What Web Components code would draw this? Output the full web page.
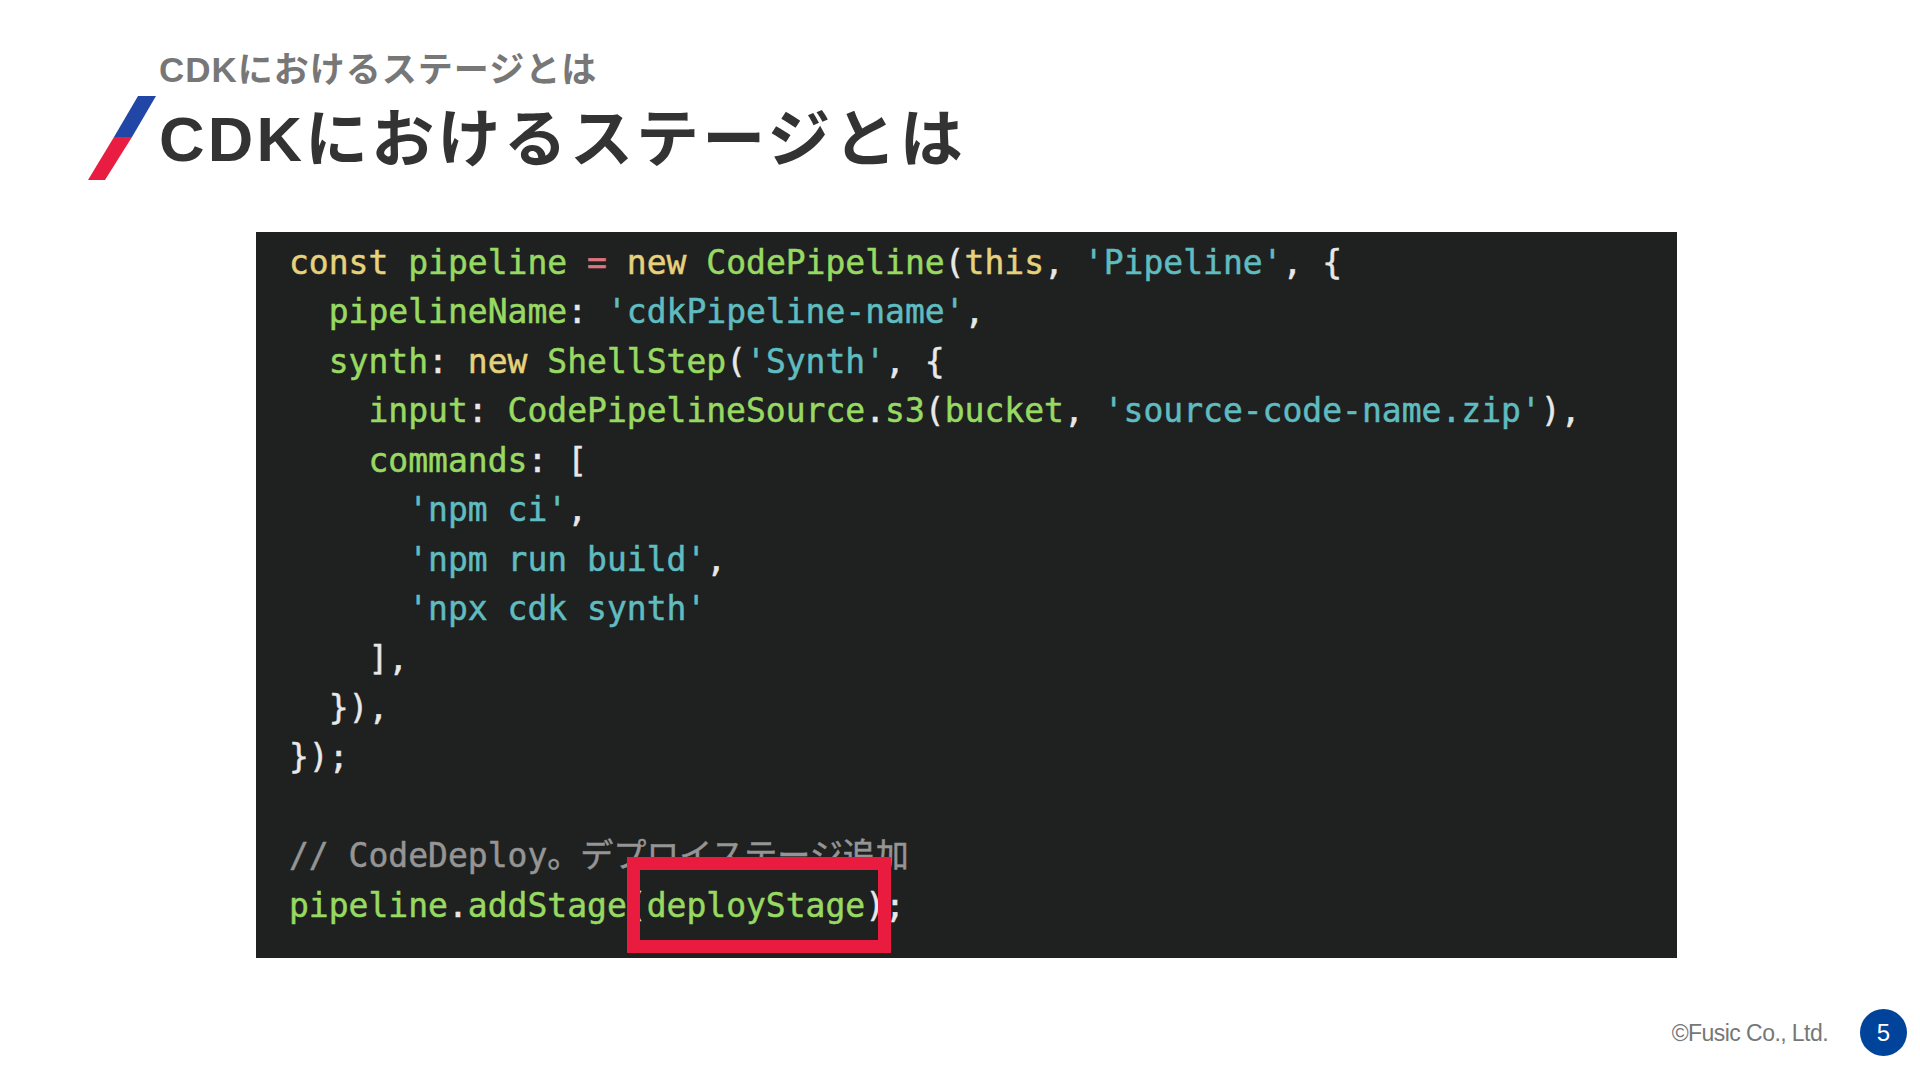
<!DOCTYPE html>
<html lang="ja"><head><meta charset="utf-8"><title>CDKにおけるステージとは</title>
<style>html,body{margin:0;padding:0;background:#fff}</style></head>
<body>
<slide-page>
  <slide-header slot="header" section="CDKにおけるステージとは" heading="CDKにおけるステージとは"></slide-header>
  <code-panel>
    <code-line><i class="k">const</i> <i class="f">pipeline</i> <i class="o">=</i> <i class="k">new</i> <i class="f">CodePipeline</i><i class="p">(</i><i class="k">this</i><i class="p">,</i> <i class="s">'Pipeline'</i><i class="p">,</i> <i class="p">{</i></code-line>
    <code-line>  <i class="f">pipelineName</i><i class="p">:</i> <i class="s">'cdkPipeline-name'</i><i class="p">,</i></code-line>
    <code-line>  <i class="f">synth</i><i class="p">:</i> <i class="k">new</i> <i class="f">ShellStep</i><i class="p">(</i><i class="s">'Synth'</i><i class="p">,</i> <i class="p">{</i></code-line>
    <code-line>    <i class="f">input</i><i class="p">:</i> <i class="f">CodePipelineSource</i><i class="p">.</i><i class="f">s3</i><i class="p">(</i><i class="f">bucket</i><i class="p">,</i> <i class="s">'source-code-name.zip'</i><i class="p">),</i></code-line>
    <code-line>    <i class="f">commands</i><i class="p">:</i> <i class="p">[</i></code-line>
    <code-line>      <i class="s">'npm ci'</i><i class="p">,</i></code-line>
    <code-line>      <i class="s">'npm run build'</i><i class="p">,</i></code-line>
    <code-line>      <i class="s">'npx cdk synth'</i></code-line>
    <code-line>    <i class="p">],</i></code-line>
    <code-line>  <i class="p">}),</i></code-line>
    <code-line><i class="p">});</i></code-line>
    <code-line> </code-line>
    <code-line><i class="c">// CodeDeploy。デプロイステージ追加</i></code-line>
    <code-line><i class="f">pipeline</i><i class="p">.</i><i class="f">addStage</i><i class="p">(</i><i class="f">deployStage</i><i class="p">);</i></code-line>
    <highlight-box slot="overlay"></highlight-box>
  </code-panel>
  <slide-footer slot="footer" page="5">©Fusic Co., Ltd.</slide-footer>
</slide-page>
<script>
function def(name, html, init){
  customElements.define(name, class extends HTMLElement{
    constructor(){super();this.attachShadow({mode:'open'}).innerHTML=html;}
    connectedCallback(){ if(init) init(this); }
  });
}
def('slide-page',`<style>
:host{display:flex;flex-direction:column;width:1920px;height:1080px;overflow:hidden;background:#fff;box-sizing:border-box}
.main{display:flex;justify-content:flex-start;padding:0 0 0 256px}
.foot{margin-top:auto}
</style><slot name="header"></slot><div class="main"><slot></slot></div><div class="foot"><slot name="footer"></slot></div>`);

def('slide-header',`<style>
:host{display:flex;align-items:flex-end;height:232px;box-sizing:border-box;padding:0 0 52px 88px;font-family:"Liberation Sans","Noto Sans CJK JP",sans-serif;font-weight:700}
svg{display:block;width:68px;height:84px;flex:none}
.t{margin-left:3px;display:flex;flex-direction:column;margin-bottom:-1px}
.s{font-size:35px;line-height:44px;color:#777;letter-spacing:1px;height:44px;margin-bottom:5px}
.h{font-size:63px;line-height:84px;height:84px;color:#333;letter-spacing:3.2px;white-space:nowrap}
</style>
<svg viewBox="0 0 68 84"><polygon points="50,0 68,0 44,41 26,41" fill="#2146a6"/><polygon points="26,41 44,41 17,84 0,84" fill="#e91c41"/></svg>
<div class="t"><div class="s" id="s"></div><div class="h" id="h"></div></div>`,
el=>{el.shadowRoot.getElementById('s').textContent=el.getAttribute('section');el.shadowRoot.getElementById('h').textContent=el.getAttribute('heading');});

def('code-panel',`<style>
:host{display:block;position:relative;width:1421px;height:726px;box-sizing:border-box;background:#1f2121;padding:6px 0 0 33px}
</style><slot></slot><slot name="overlay"></slot>`);

def('code-line',`<style>
:host{display:block;height:49.45px;line-height:49.45px;white-space:pre;font-family:"DejaVu Sans Mono","Noto Sans CJK JP",monospace;font-size:33px;color:#e8e8e8;-webkit-text-stroke:.5px currentColor}
</style><slot></slot>`);

def('highlight-box',`<style>
:host{position:absolute;left:371px;top:625px;width:264px;height:96px;box-sizing:border-box;border:13px solid #e91c3f;display:block}
</style>`);

def('slide-footer',`<style>
:host{display:flex;justify-content:flex-end;align-items:center;height:47px;padding:0 13px 24px 0;font-family:"Liberation Sans",Arial,sans-serif}
.c{font-size:23px;color:#777;letter-spacing:-.56px;margin-right:32px;padding-top:2px}
.n{width:47px;height:47px;border-radius:50%;background:#00439b;color:#fff;font-size:24px;display:flex;align-items:center;justify-content:center}
</style><span class="c"><slot></slot></span><span class="n" id="n"></span>`,
el=>{el.shadowRoot.getElementById('n').textContent=el.getAttribute('page');});
</script>
<style>
code-line i{font-style:normal}
i.k{color:#e6d27c}i.f{color:#98d962}i.o{color:#e0737f}i.s{color:#5fbcc0}i.p{color:#e8e8e8}i.c{color:#959595}
</style>
</body></html>
